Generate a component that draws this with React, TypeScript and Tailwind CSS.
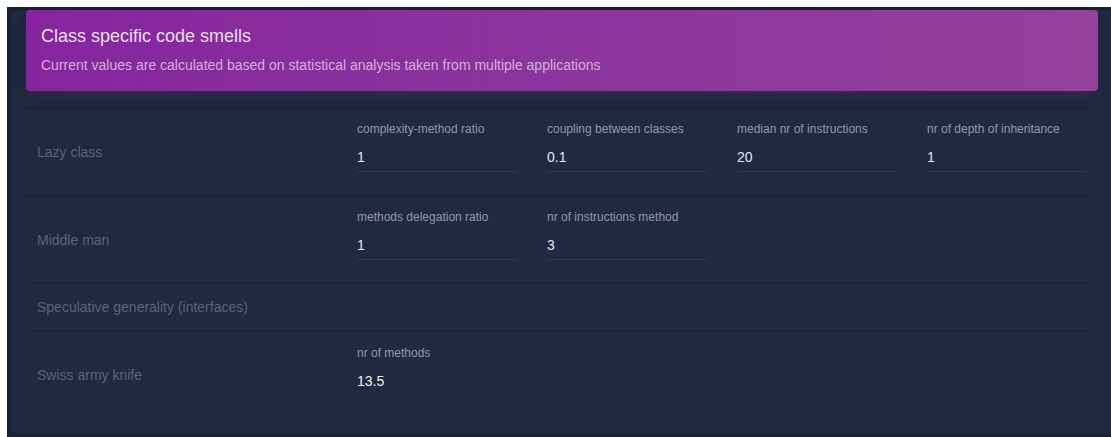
import React from "react";

type Field = { label: string; value: string };
type Smell = { name: string; fields: Field[]; height: string; plain?: boolean };

const smells: Smell[] = [
	{
		name: "Lazy class",
		height: "h-[88px]",
		fields: [
			{ label: "complexity-method ratio", value: "1" },
			{ label: "coupling between classes", value: "0.1" },
			{ label: "median nr of instructions", value: "20" },
			{ label: "nr of depth of inheritance", value: "1" },
		],
	},
	{
		name: "Middle man",
		height: "h-[87px]",
		fields: [
			{ label: "methods delegation ratio", value: "1" },
			{ label: "nr of instructions method", value: "3" },
		],
	},
	{ name: "Speculative generality (interfaces)", height: "h-[48px]", fields: [] },
	{
		name: "Swiss army knife",
		height: "h-[88px]",
		plain: true,
		fields: [{ label: "nr of methods", value: "13.5" }],
	},
];

const SmellRow: React.FC<{ smell: Smell }> = ({ smell }) => (
	<div className={`flex border-t-2 border-[#1c2436] ${smell.height}`}>
		<div className="w-[320px] shrink-0 self-center pl-[11px] text-[14px] leading-[20px] text-[#5a637c]">
			{smell.name}
		</div>
		{smell.fields.length > 0 && (
			<div className={`flex gap-[30px] pl-[11px] ${smell.plain ? "pt-[13px]" : "pt-[12px]"}`}>
				{smell.fields.map((f) => (
					<div key={f.label} className="w-[160px]">
						<div className="text-[12px] leading-[16px] text-[#9298a6]">{f.label}</div>
						<div
							className={
								smell.plain
									? "pt-[10px] text-[14px] leading-[20px] text-[#f0f0f2]"
									: "pt-[10px] pb-[4px] border-b border-[#2d374e] text-[14px] leading-[20px] text-[#e6e7ea]"
							}
						>
							{f.value}
						</div>
					</div>
				))}
			</div>
		)}
	</div>
);

export default function App() {
	return (
		<div
			className="min-h-screen overflow-hidden bg-white pl-[7px] pt-[7px]"
			style={{ fontFamily: '"Liberation Sans", Arial, sans-serif' }}
		>
			<div className="w-[1130px] bg-[#1a2030] pl-[4px] pt-[23px] pb-[3px]">
				<div className="w-[1115px] rounded-md bg-[#1f2940] pl-[15px] pb-[16px]">
					<div className="-mt-[20px] w-[1072px] rounded-[4px] bg-gradient-to-r from-[#85259e] to-[#93419b] px-[15px] pt-[14px] pb-[16px] shadow-[0_4px_20px_0_rgba(0,0,0,0.14),0_7px_10px_-5px_rgba(156,39,176,0.4)]">
						<div className="text-[18px] font-light leading-[25px] text-[#ecdff1]">Class specific code smells</div>
						<div className="mt-[6px] text-[14px] font-light leading-[20px] text-[#d3b0dc]">
							Current values are calculated based on statistical analysis taken from multiple applications
						</div>
					</div>
					<div className="mt-[16px] w-[1067px]">
						{smells.map((s) => (
							<SmellRow key={s.name} smell={s} />
						))}
					</div>
				</div>
			</div>
		</div>
	);
}
